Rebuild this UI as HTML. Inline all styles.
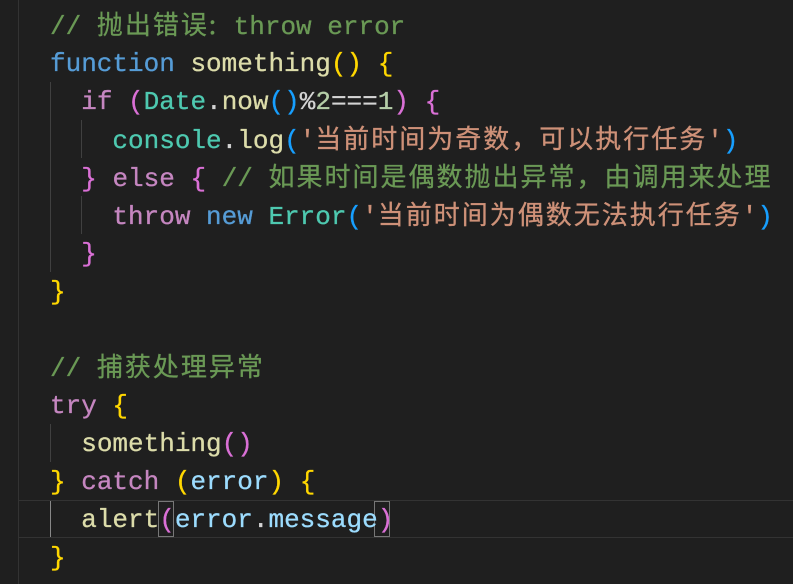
<!DOCTYPE html>
<html><head><meta charset="utf-8"><style>
html,body{margin:0;padding:0;background:#1f1f1f;width:793px;height:584px;overflow:hidden}
.code{position:absolute;left:50px;top:5px;font-family:"Liberation Mono","Noto Sans CJK SC",monospace;font-size:26px;color:#d4d4d4;white-space:normal;-webkit-text-stroke:0.3px}
.code div{height:38px;line-height:38px;overflow:visible;white-space:pre}
.code div.a{position:relative;top:2px}
.code span{line-height:38px}
.c{color:#6a9955}.k{color:#569cd6}.f{color:#dcdcaa}.y{color:#ffd700}.p{color:#da70d6}.b{color:#179fff}
.kw{color:#c586c0}.t{color:#4ec9b0}.s{color:#ce9178}.n{color:#b5cea8}.v{color:#9cdcfe}
.z{font-family:"Noto Sans CJK SC",sans-serif;letter-spacing:2px}
.g{position:absolute;width:1px;background:#404040}
.hl{position:absolute;left:18px;right:0;top:500px;height:36px;border-top:1px solid #333;border-bottom:1px solid #333}
.box{position:absolute;border:1px solid #777;height:34px;top:501px}
</style></head><body>
<div class="g" style="left:18px;top:0;height:584px;background:#333"></div>
<div class="g" style="left:50px;top:82px;height:190px"></div>
<div class="g" style="left:81px;top:120px;height:38px"></div>
<div class="g" style="left:81px;top:196px;height:38px"></div>
<div class="g" style="left:50px;top:424px;height:38px"></div>
<div class="g" style="left:50px;top:500px;height:38px;background:#888"></div>
<div class="hl"></div>
<div class="box" style="left:158px;width:14px"></div>
<div class="box" style="left:374px;width:14px"></div>
<div class="code"><div><span class="c">// <span class="z">抛出错误:</span> throw error</span></div><div class="a"><span class="k">function</span> <span class="f">something</span><span class="y">()</span> <span class="y">{</span></div><div class="a">  <span class="kw">if</span> <span class="p">(</span><span class="t">Date</span>.<span class="f">now</span><span class="b">()</span>%<span class="n">2</span>===<span class="n">1</span><span class="p">)</span> <span class="p">{</span></div><div>    <span class="t">console</span>.<span class="f">log</span><span class="b">(</span><span class="s">'<span class="z">当前时间为奇数，可以执行任务</span>'</span><span class="b">)</span></div><div>  <span class="p">}</span> <span class="kw">else</span> <span class="p">{</span> <span class="c">// <span class="z">如果时间是偶数抛出异常，由调用来处理</span></span></div><div>    <span class="kw">throw</span> <span class="k">new</span> <span class="t">Error</span><span class="b">(</span><span class="s">'<span class="z">当前时间为偶数无法执行任务</span>'</span><span class="b">)</span></div><div class="a">  <span class="p">}</span></div><div class="a"><span class="y">}</span></div><div> </div><div><span class="c">// <span class="z">捕获处理异常</span></span></div><div class="a"><span class="kw">try</span> <span class="y">{</span></div><div class="a">  <span class="f">something</span><span class="p">()</span></div><div class="a"><span class="y">}</span> <span class="kw">catch</span> <span class="y">(</span><span class="v">error</span><span class="y">)</span> <span class="y">{</span></div><div class="a">  <span class="f">alert</span><span class="p">(</span><span class="v">error</span>.<span class="v">message</span><span class="p">)</span></div><div class="a"><span class="y">}</span></div></div>
</body></html>
